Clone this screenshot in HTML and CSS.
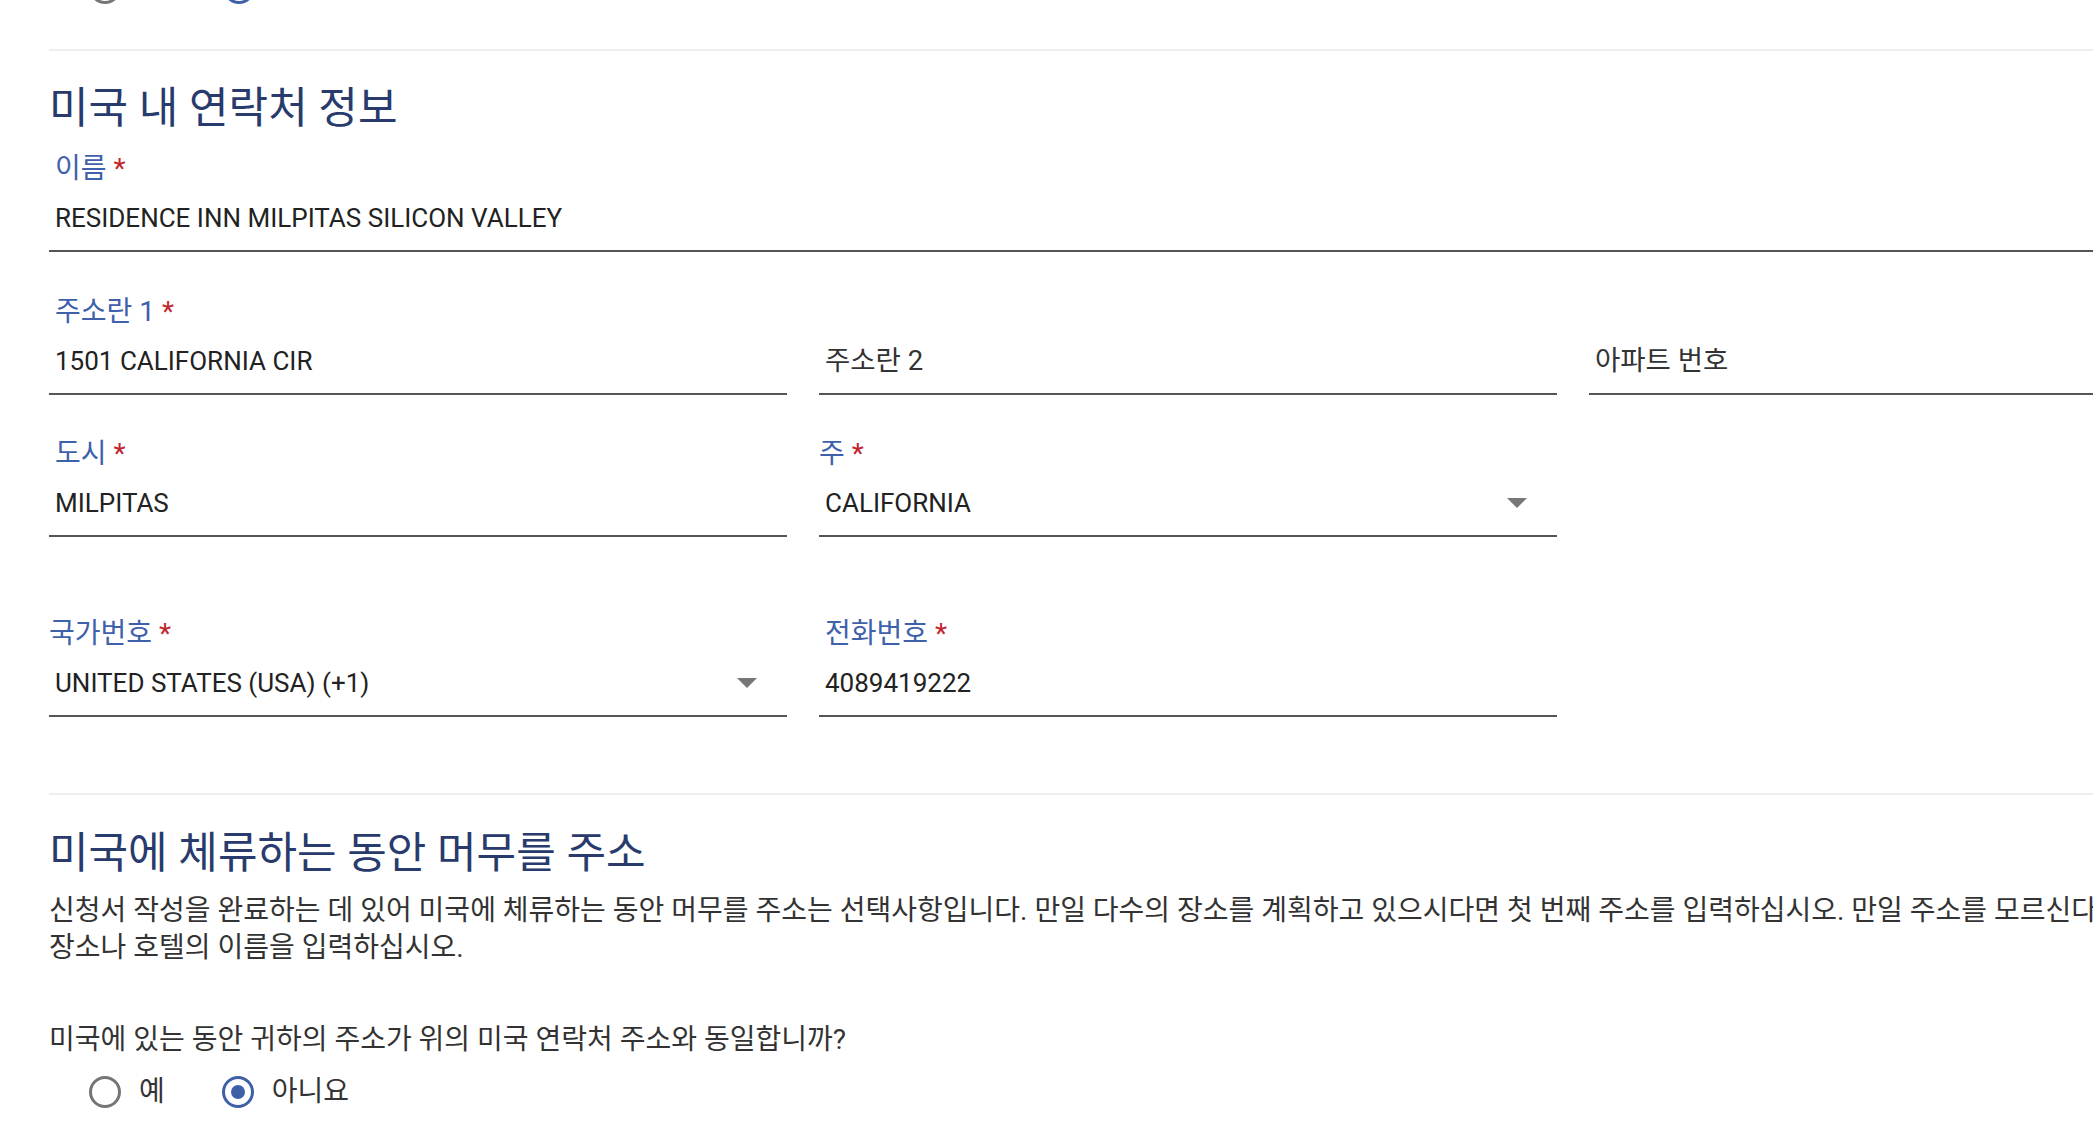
FILE: index.html
```html
<!DOCTYPE html>
<html lang="ko">
<head>
<meta charset="utf-8">
<title>미국 내 연락처 정보</title>
<link rel="stylesheet" href="styles.css">
</head>
<body>
<div class="page">
  <div class="radio-group top">
    <span class="circle"></span>
    <span class="circle checked"></span>
  </div>

  <section class="section contact">
    <h2 class="title title-1">미국 내 연락처 정보</h2>

    <div class="row row-1">
      <div class="field full">
        <div class="label">이름<span class="req">*</span></div>
        <div class="value">RESIDENCE INN MILPITAS SILICON VALLEY</div>
      </div>
    </div>

    <div class="row row-2">
      <div class="field">
        <div class="label">주소란 1<span class="req">*</span></div>
        <div class="value">1501 CALIFORNIA CIR</div>
      </div>
      <div class="field">
        <div class="label"></div>
        <div class="value placeholder">주소란 2</div>
      </div>
      <div class="field">
        <div class="label"></div>
        <div class="value placeholder">아파트 번호</div>
      </div>
    </div>

    <div class="row row-3">
      <div class="field">
        <div class="label">도시<span class="req">*</span></div>
        <div class="value">MILPITAS</div>
      </div>
      <div class="field select">
        <div class="label">주<span class="req">*</span></div>
        <div class="value"><span class="vtext">CALIFORNIA</span><span class="arrow"></span></div>
      </div>
    </div>

    <div class="row row-4">
      <div class="field select">
        <div class="label">국가번호<span class="req">*</span></div>
        <div class="value"><span class="vtext">UNITED STATES (USA) (+1)</span><span class="arrow"></span></div>
      </div>
      <div class="field">
        <div class="label">전화번호<span class="req">*</span></div>
        <div class="value">4089419222</div>
      </div>
    </div>
  </section>

  <section class="section stay">
    <h2 class="title title-2">미국에 체류하는 동안 머무를 주소</h2>
    <p class="desc">신청서 작성을 완료하는 데 있어 미국에 체류하는 동안 머무를 주소는 선택사항입니다. 만일 다수의 장소를 계획하고 있으시다면 첫 번째 주소를 입력하십시오. 만일 주소를 모르신다면 머무를<br>장소나 호텔의 이름을 입력하십시오.</p>
    <p class="question">미국에 있는 동안 귀하의 주소가 위의 미국 연락처 주소와 동일합니까?</p>
    <div class="radio-group">
      <label class="radio"><span class="circle"></span><span class="rtext">예</span></label>
      <label class="radio"><span class="circle checked"></span><span class="rtext">아니요</span></label>
    </div>
  </section>
</div>
</body>
</html>
```

FILE: styles.css
```css
html, body {
  margin: 0;
  padding: 0;
  background: #ffffff;
}

body {
  overflow: hidden;
  font-family: Roboto, "Noto Sans CJK KR", "Noto Sans", sans-serif;
  color: #333333;
}

.page {
  width: 2278px;
  padding-left: 49px;
}

/* radios */
.radio-group {
  display: flex;
  align-items: center;
  gap: 57px;
  height: 32px;
  padding-left: 40px;
}

.radio-group.top {
  gap: 102px;
  margin-top: -28px;
}

.radio {
  display: flex;
  align-items: center;
  gap: 18px;
  font-size: 28px;
  line-height: 32px;
  color: #333333;
}

.circle {
  flex: none;
  width: 32px;
  height: 32px;
  box-sizing: border-box;
  border: 3px solid #757575;
  border-radius: 50%;
  display: flex;
  align-items: center;
  justify-content: center;
}

.circle.checked {
  border-color: #3f60a8;
}

.circle.checked::after {
  content: "";
  width: 14px;
  height: 14px;
  border-radius: 50%;
  background: #3f60a8;
}

/* sections */
.section {
  border-top: 2px solid #eeeeee;
}

.section.contact {
  margin-top: 45px;
}

.section.stay {
  margin-top: 76px;
}

.title {
  margin: 0;
  font-weight: 400;
  font-size: 43px;
  color: #283b6c;
  white-space: nowrap;
}

.title-1 {
  margin-top: 29px;
  line-height: 56px;
}

.title-2 {
  margin-top: 32px;
  line-height: 52px;
}

/* form rows */
.row {
  display: grid;
  grid-template-columns: repeat(3, 738px);
  column-gap: 32px;
}

.row-1 { margin-top: 14px; }
.row-2 { margin-top: 41px; }
.row-3 { margin-top: 40px; }
.row-4 { margin-top: 78px; }

.field {
  border-bottom: 2px solid #555555;
}

.field.full {
  grid-column: 1 / -1;
}

.label {
  height: 32px;
  padding: 3px 0 0 6px;
  font-size: 28px;
  line-height: 32px;
  color: #3f60ab;
  white-space: nowrap;
}

.field.select .label {
  padding-left: 0;
}

.req {
  margin-left: 7px;
  color: #c0262d;
}

.value {
  display: flex;
  align-items: center;
  margin-top: 11px;
  height: 44px;
  padding: 0 0 10px 6px;
  font-size: 26px;
  line-height: 44px;
  color: #222222;
  white-space: nowrap;
}

.value.placeholder {
  font-size: 27.5px;
  color: #333333;
}

.vtext {
  flex: 1;
}

.arrow {
  width: 0;
  height: 0;
  margin-right: 30px;
  border-left: 10px solid transparent;
  border-right: 10px solid transparent;
  border-top: 10px solid #777777;
}

/* description */
.desc {
  margin: 13px 0 0;
  font-size: 28px;
  line-height: 37px;
  color: #333333;
  white-space: nowrap;
}

.question {
  margin: 56px 0 0;
  font-size: 28px;
  line-height: 36px;
  color: #333333;
  white-space: nowrap;
}

.stay .radio-group {
  margin-top: 18px;
}
```
